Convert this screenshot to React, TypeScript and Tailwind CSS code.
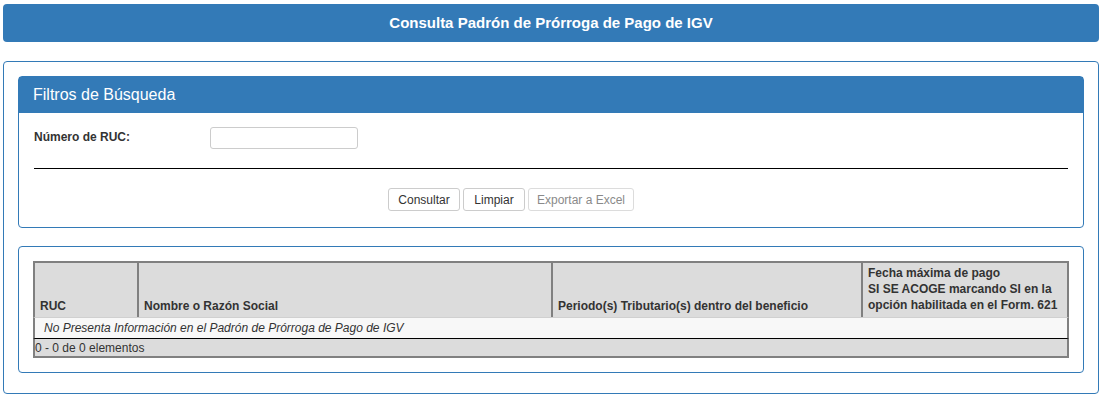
const headers = [
  { label: "RUC", width: "w-[104px]" },
  { label: "Nombre o Razón Social", width: "w-[414px]" },
  { label: "Periodo(s) Tributario(s) dentro del beneficio", width: "w-[310px]" },
];

function Button({ label, disabled, width }: { label: string; disabled?: boolean; width: string }) {
  return (
    <button
      disabled={disabled}
      className={`${width} h-[23px] rounded-[3px] border bg-white text-[12px] ${
        disabled ? "border-[#dcdcdc] text-[#8a8a8a]" : "border-[#cccccc] text-[#333]"
      }`}
    >
      {label}
    </button>
  );
}

export default function App() {
  return (
    <div className="min-h-[400px] w-[1105px] bg-white pl-[3px] pr-[6px] pt-[4px] font-['Liberation_Sans',Arial,sans-serif] text-[#333]">
      <div className="flex h-[38px] items-center justify-center rounded-[4px] bg-[#337ab7] text-[15px] font-bold text-white">
        Consulta Padrón de Prórroga de Pago de IGV
      </div>

      <div className="mt-[19px] rounded-[4px] border border-[#337ab7] px-[14px] pb-[20px] pt-[14px]">
        {/* filtros */}
        <div className="rounded-[4px] border border-[#337ab7]">
          <div className="flex h-[36px] items-center bg-[#337ab7] pl-[14px] text-[16px] text-white">
            Filtros de Búsqueda
          </div>
          <div className="px-[15px] pb-[16px] pt-[14px]">
            <div className="flex">
              <label className="w-[176px] pt-[1px] text-[12px] font-bold">Número de RUC:</label>
              <input className="h-[22px] w-[148px] rounded-[3px] border border-[#cccccc] bg-white outline-none" />
            </div>
            <hr className="mt-[19px] border-t border-black" />
            <div className="mt-[19px] flex gap-[3px] pl-[354px]">
              <Button label="Consultar" width="w-[72px]" />
              <Button label="Limpiar" width="w-[62px]" />
              <Button label="Exportar a Excel" width="w-[106px]" disabled />
            </div>
          </div>
        </div>

        {/* resultados */}
        <div className="mt-[18px] rounded-[4px] border border-[#337ab7] px-[14px] py-[14px]">
          <div className="text-[12px]">
            <div className="flex h-[56px] border-t-2 border-[#808080] bg-[#dcdcdc] font-bold">
              {headers.map((h) => (
                <div
                  key={h.label}
                  className={`${h.width} flex items-end border-l-2 border-[#808080] pb-[2px] pl-[5px]`}
                >
                  {h.label}
                </div>
              ))}
              <div className="flex w-[208px] items-end border-x-2 border-[#808080] pb-[4px] pl-[5px] leading-[16px]">
                Fecha máxima de pago
                <br />
                SI SE ACOGE marcando SI en la
                <br />
                opción habilitada en el Form. 621
              </div>
            </div>
            <div className="flex h-[22px] items-center border-x-2 border-b border-t border-x-[#808080] border-b-black border-t-[#d0d0d0] bg-[#f8f8f8] pl-[9px] italic">
              No Presenta Información en el Padrón de Prórroga de Pago de IGV
            </div>
            <div className="flex h-[19px] items-center border-x-2 border-b-2 border-[#808080] bg-[#dcdcdc]">
              0 - 0 de 0 elementos
            </div>
          </div>
        </div>
      </div>
    </div>
  );
}
